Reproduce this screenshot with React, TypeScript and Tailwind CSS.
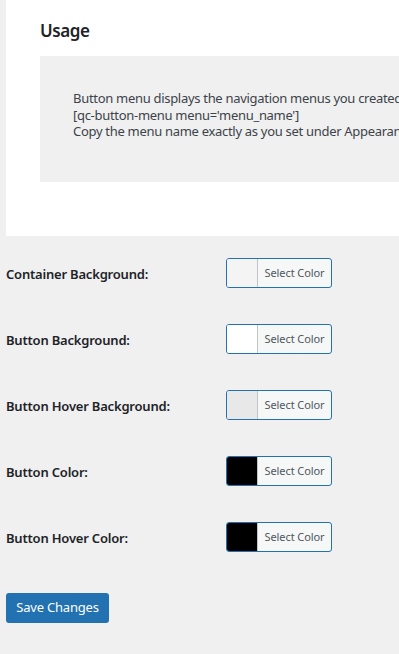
const font = "font-['Segoe_UI','Noto_Sans','Open_Sans',sans-serif]"

const fields = [
  { label: 'Container Background:', swatch: 'bg-[#f4f4f4]' },
  { label: 'Button Background:', swatch: 'bg-white' },
  { label: 'Button Hover Background:', swatch: 'bg-[#e8e8e8]' },
  { label: 'Button Color:', swatch: 'bg-black' },
  { label: 'Button Hover Color:', swatch: 'bg-black' },
]

function ColorButton({ swatch }: { swatch: string }) {
  return (
    <button className="flex h-[30px] w-[106px] overflow-hidden rounded-[3px] border border-[#2271b1] bg-[#f6f7f7] p-0">
      <span className={`h-full w-[31px] border-r border-[#c3c4c7] ${swatch}`} />
      <span className="flex h-full flex-1 items-center justify-center text-[11px] tracking-[-0.1px] text-[#50575e]">Select Color</span>
    </button>
  )
}

export default function App() {
  return (
    <div className={`min-h-[654px] w-[399px] overflow-hidden bg-[#f0f0f1] text-[#1d2327] ${font}`}>
      <div className="ml-[6px] h-[236px] w-[600px] bg-white pl-[34px] pt-[19px]">
        <h2 className="text-[17px] font-semibold leading-[24px] tracking-[-0.4px]">Usage</h2>
        <div className="mt-[13px] h-[126px] bg-[#f0f0f0] pl-[33px] pt-[34px] text-[13px] leading-[16.5px] tracking-[-0.3px] text-[#3c434a]">
          <div className="whitespace-nowrap">Button menu displays the navigation menus you created in Appearance &gt; Menus.</div>
          <div className="whitespace-nowrap">[qc-button-menu menu='menu_name']</div>
          <div className="whitespace-nowrap">Copy the menu name exactly as you set under Appearance &gt; Menus.</div>
        </div>
      </div>

      <div className="mt-[22px] flex flex-col gap-[36px] pl-[6px]">
        {fields.map(f => (
          <div key={f.label} className="flex items-center">
            <div className="w-[220px] pt-[3px] text-[13px] font-semibold tracking-[-0.2px]">{f.label}</div>
            <ColorButton swatch={f.swatch} />
          </div>
        ))}
      </div>

      <div className="mt-[41px] pl-[6px]">
        <button className="h-[30px] w-[103px] rounded-[3px] bg-[#2271b1] text-[13px] tracking-[-0.2px] text-white">Save Changes</button>
      </div>
    </div>
  )
}
